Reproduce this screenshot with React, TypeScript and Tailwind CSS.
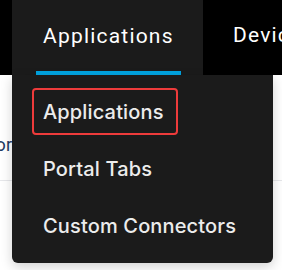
const items = ['Applications', 'Portal Tabs', 'Custom Connectors'];

export default function App() {
  return (
    <div className="relative h-[270px] w-[282px] overflow-hidden bg-white">
      {/* top nav */}
      <div className="flex h-[75px] bg-black pl-[12px] font-['Roboto',sans-serif] text-[21px] tracking-[1.2px] text-white">
        <div className="w-[191px] shrink-0 bg-[#1b1b1b] pl-[24px]">
          <div className="flex h-[75px] w-fit items-center border-b-4 border-[#00a3e0] px-[7px] pt-[2px]">
            Applications
          </div>
        </div>
        <div className="flex h-[71px] shrink-0 items-center whitespace-nowrap pl-[30px]">Devices</div>
      </div>

      {/* page content peeking out behind the menu */}
      <div className="flex h-[106px] flex-col border-b border-[#e6e7ea]">
        <div className="mt-[56px] flex w-[12px] justify-end whitespace-nowrap font-['Roboto',sans-serif] text-[18px] text-[#233a63]">
          Connector
        </div>
      </div>

      {/* dropdown */}
      <div className="absolute left-[12px] top-[75px] flex h-[188px] w-[261px] flex-col gap-[10px] rounded-b-[6px] bg-[#1b1b1b] px-[20px] pt-[13px] font-['Inter',sans-serif] text-[20px] font-medium tracking-[0.15px] text-[#ececec] shadow-[0_4px_12px_rgba(0,0,0,0.18)]">
        {items.map((label, i) => (
          <div
            key={label}
            className={
              i === 0
                ? 'flex h-[47px] w-[146px] items-center rounded-[4px] border-2 border-[#ee3b3b] pl-[9px]'
                : 'flex h-[47px] items-center pl-[11px]'
            }
          >
            {label}
          </div>
        ))}
      </div>
    </div>
  );
}
